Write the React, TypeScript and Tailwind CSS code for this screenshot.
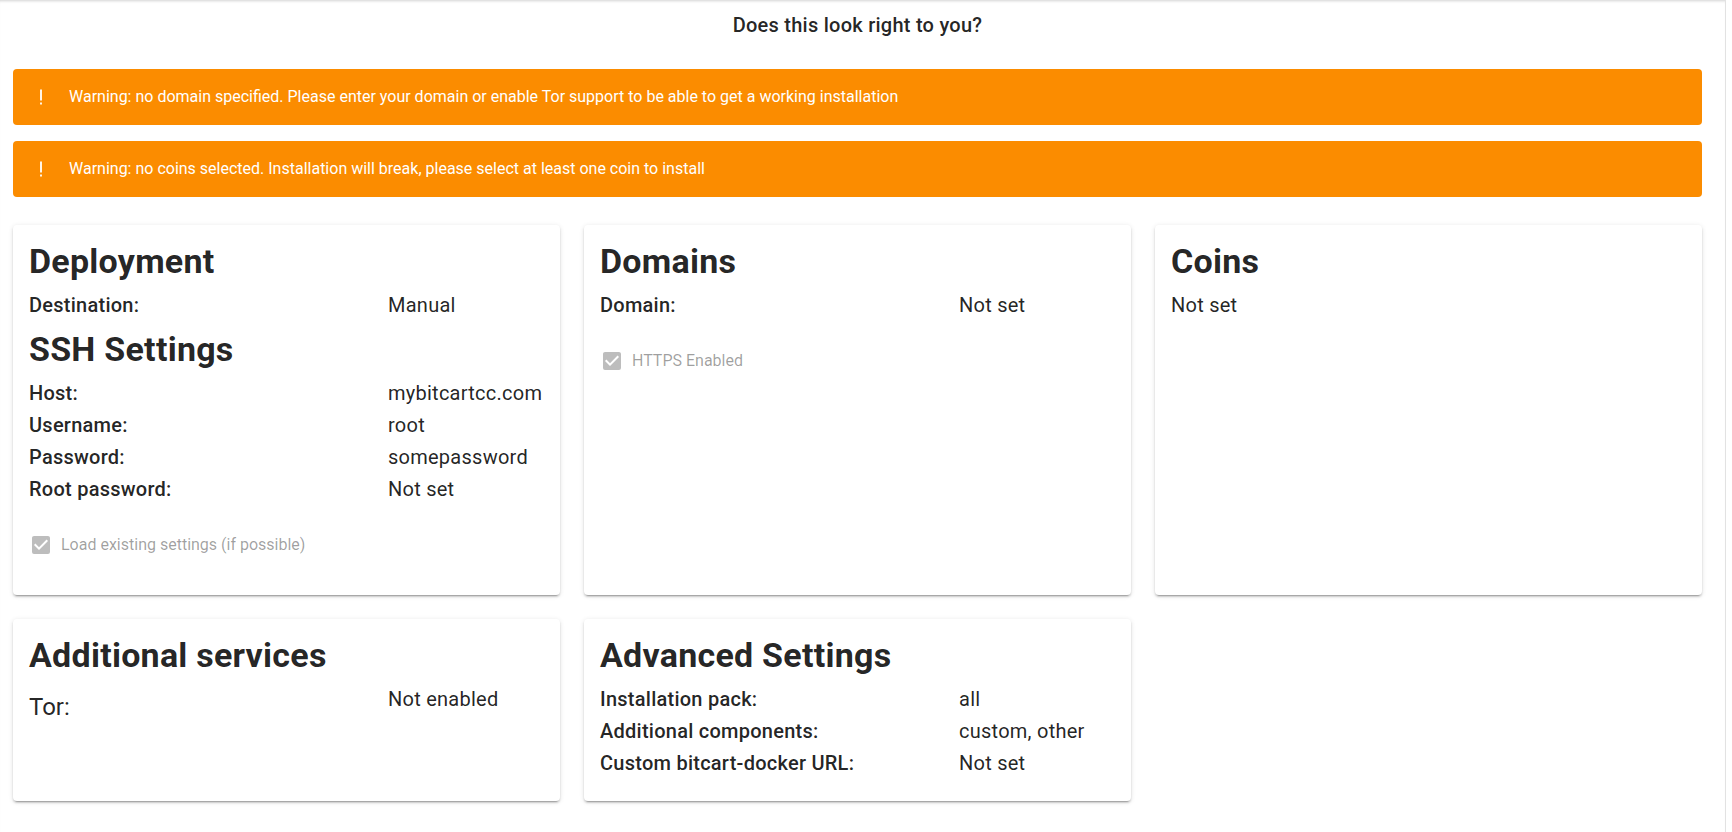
import React from "react";

const Check = ({ label }: { label: string }) => (
  <div className="mt-7 mb-4 flex h-6 items-center">
    <svg width="24" height="24" viewBox="0 0 24 24" className="shrink-0">
      <path
        fill="rgba(0,0,0,0.26)"
        d="M10,17L5,12L6.41,10.58L10,14.17L17.59,6.58L19,8M19,3H5C3.89,3 3,3.89 3,5V19A2,2 0 0,0 5,21H19A2,2 0 0,0 21,19V5C21,3.89 20.1,3 19,3Z"
      />
    </svg>
    <span className="ml-2 text-[16px] leading-6 text-[rgba(0,0,0,0.38)]">{label}</span>
  </div>
);

const Heading = ({ children, className = "" }: { children: React.ReactNode; className?: string }) => (
  <h2 className={`mb-2 text-[34px] font-bold leading-10 tracking-[0.25px] text-[rgba(0,0,0,0.87)] ${className}`}>
    {children}
  </h2>
);

const Row = ({ label, value }: { label: string; value: string }) => (
  <div className="grid grid-cols-[359px_1fr] text-[20px] leading-8 tracking-[0.25px] text-[rgba(0,0,0,0.87)]">
    <div className="font-medium">{label}</div>
    <div className="font-normal">{value}</div>
  </div>
);

const Card = ({ children }: { children: React.ReactNode }) => (
  <div className="rounded bg-white px-4 pt-4 pb-[22px] shadow-[0_3px_1px_-2px_rgba(0,0,0,0.2),0_2px_2px_0_rgba(0,0,0,0.14),0_1px_5px_0_rgba(0,0,0,0.12)]">
    {children}
  </div>
);

const Alert = ({ text }: { text: string }) => (
  <div className="flex items-center rounded bg-[#fb8c00] p-4 text-white">
    <svg width="24" height="24" viewBox="0 0 24 24" className="mr-4 shrink-0">
      <path fill="rgba(255,255,255,0.9)" d="M11,4.5H13V15.5H11V4.5M13,17.5V19.5H11V17.5H13Z" />
    </svg>
    <span className="text-[16px] leading-6">{text}</span>
  </div>
);

export default function App() {
  return (
    <div
      className="min-h-screen w-[1726px] border-r border-[#e2e2e2] bg-white shadow-[inset_0_3px_3px_-2px_rgba(0,0,0,0.18)]"
      style={{ fontFamily: "Roboto, 'Noto Sans', sans-serif" }}
    >
      <div className="flex w-[1715px] flex-col px-[13px] pt-[9px] pb-8">
        <div className="text-center text-[20px] font-medium leading-8 tracking-[0.25px] text-[rgba(0,0,0,0.87)]">
          Does this look right to you?
        </div>
        <div className="mt-7 flex flex-col gap-4">
          <Alert text="Warning: no domain specified. Please enter your domain or enable Tor support to be able to get a working installation" />
          <Alert text="Warning: no coins selected. Installation will break, please select at least one coin to install" />
        </div>
        <div className="mt-7 grid grid-cols-3 gap-6">
          <Card>
            <Heading>Deployment</Heading>
            <Row label="Destination:" value="Manual" />
            <Heading className="mt-2">SSH Settings</Heading>
            <Row label="Host:" value="mybitcartcc.com" />
            <Row label="Username:" value="root" />
            <Row label="Password:" value="somepassword" />
            <Row label="Root password:" value="Not set" />
            <Check label="Load existing settings (if possible)" />
          </Card>
          <Card>
            <Heading>Domains</Heading>
            <Row label="Domain:" value="Not set" />
            <Check label="HTTPS Enabled" />
          </Card>
          <Card>
            <Heading>Coins</Heading>
            <div className="text-[20px] leading-8 tracking-[0.25px] text-[rgba(0,0,0,0.87)]">Not set</div>
          </Card>
          <Card>
            <Heading>Additional services</Heading>
            <div className="grid grid-cols-[359px_1fr] text-[rgba(0,0,0,0.87)]">
              <div className="mt-2 text-[24px] leading-8">Tor:</div>
              <div className="text-[20px] leading-8 tracking-[0.25px]">Not enabled</div>
            </div>
          </Card>
          <Card>
            <Heading>Advanced Settings</Heading>
            <Row label="Installation pack:" value="all" />
            <Row label="Additional components:" value="custom, other" />
            <Row label="Custom bitcart-docker URL:" value="Not set" />
          </Card>
        </div>
      </div>
    </div>
  );
}
